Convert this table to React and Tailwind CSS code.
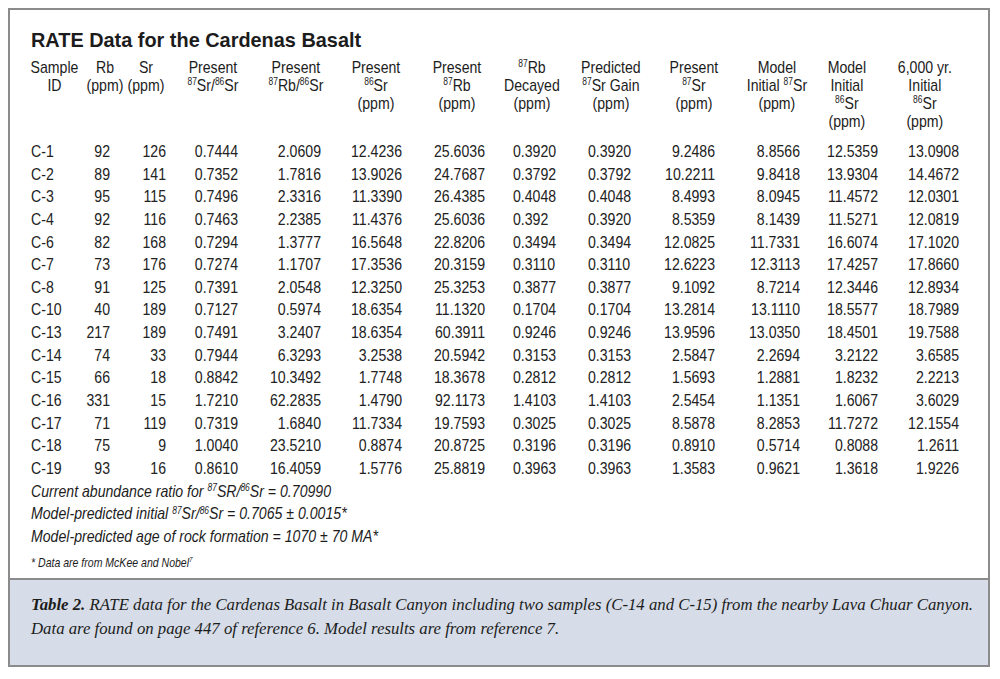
const rows = [
  ["C-1", "92", "126", "0.7444", "2.0609", "12.4236", "25.6036", "0.3920", "0.3920", "9.2486", "8.8566", "12.5359", "13.0908"],
  ["C-2", "89", "141", "0.7352", "1.7816", "13.9026", "24.7687", "0.3792", "0.3792", "10.2211", "9.8418", "13.9304", "14.4672"],
  ["C-3", "95", "115", "0.7496", "2.3316", "11.3390", "26.4385", "0.4048", "0.4048", "8.4993", "8.0945", "11.4572", "12.0301"],
  ["C-4", "92", "116", "0.7463", "2.2385", "11.4376", "25.6036", "0.392", "0.3920", "8.5359", "8.1439", "11.5271", "12.0819"],
  ["C-6", "82", "168", "0.7294", "1.3777", "16.5648", "22.8206", "0.3494", "0.3494", "12.0825", "11.7331", "16.6074", "17.1020"],
  ["C-7", "73", "176", "0.7274", "1.1707", "17.3536", "20.3159", "0.3110", "0.3110", "12.6223", "12.3113", "17.4257", "17.8660"],
  ["C-8", "91", "125", "0.7391", "2.0548", "12.3250", "25.3253", "0.3877", "0.3877", "9.1092", "8.7214", "12.3446", "12.8934"],
  ["C-10", "40", "189", "0.7127", "0.5974", "18.6354", "11.1320", "0.1704", "0.1704", "13.2814", "13.1110", "18.5577", "18.7989"],
  ["C-13", "217", "189", "0.7491", "3.2407", "18.6354", "60.3911", "0.9246", "0.9246", "13.9596", "13.0350", "18.4501", "19.7588"],
  ["C-14", "74", "33", "0.7944", "6.3293", "3.2538", "20.5942", "0.3153", "0.3153", "2.5847", "2.2694", "3.2122", "3.6585"],
  ["C-15", "66", "18", "0.8842", "10.3492", "1.7748", "18.3678", "0.2812", "0.2812", "1.5693", "1.2881", "1.8232", "2.2213"],
  ["C-16", "331", "15", "1.7210", "62.2835", "1.4790", "92.1173", "1.4103", "1.4103", "2.5454", "1.1351", "1.6067", "3.6029"],
  ["C-17", "71", "119", "0.7319", "1.6840", "11.7334", "19.7593", "0.3025", "0.3025", "8.5878", "8.2853", "11.7272", "12.1554"],
  ["C-18", "75", "9", "1.0040", "23.5210", "0.8874", "20.8725", "0.3196", "0.3196", "0.8910", "0.5714", "0.8088", "1.2611"],
  ["C-19", "93", "16", "0.8610", "16.4059", "1.5776", "25.8819", "0.3963", "0.3963", "1.3583", "0.9621", "1.3618", "1.9226"],
];

// alignment of each data column
const cellAlign = [
  "text-left",
  "text-right",
  "text-right",
  "text-right",
  "text-right",
  "text-right",
  "text-right",
  "text-left pl-[33.7px]",
  "text-left",
  "text-right",
  "text-right",
  "text-right",
  "text-right",
];

function S({ children }) {
  return <sup className="text-[0.6em] top-[-0.55em]">{children}</sup>;
}

const headers = [
  ["Sample", "ID"],
  ["Rb", "(ppm)"],
  ["Sr", "(ppm)"],
  ["Present", <><S>87</S>Sr/<S>86</S>Sr</>],
  ["Present", <><S>87</S>Rb/<S>86</S>Sr</>],
  ["Present", <><S>86</S>Sr</>, "(ppm)"],
  ["Present", <><S>87</S>Rb</>, "(ppm)"],
  [<><S>87</S>Rb</>, "Decayed", "(ppm)"],
  ["Predicted", <><S>87</S>Sr Gain</>, "(ppm)"],
  ["Present", <><S>87</S>Sr</>, "(ppm)"],
  ["Model", <>Initial <S>87</S>Sr</>, "(ppm)"],
  ["Model", "Initial", <><S>86</S>Sr</>, "(ppm)"],
  ["6,000 yr.", "Initial", <><S>86</S>Sr</>, "(ppm)"],
];

export default function App() {
  return (
    <div className="w-[1000px] h-[679px] bg-white pt-[8px] pl-[8px]">
      <div className="w-[982px] border-2 border-[#8b8b8b] text-[#1c1c1c]">
        {/* Table */}
        <div className="pl-[21px] pt-[18px] pb-[8px]">
          <h1 className="font-['Liberation_Sans',sans-serif] font-bold text-[19.9px] leading-[24px]">
            RATE Data for the Cardenas Basalt
          </h1>

          {/* condensed block: laid out wide, squeezed horizontally */}
          <div className="w-[1129px] origin-top-left scale-x-[0.83] font-['Liberation_Sans',sans-serif] text-[17px]">
            <div className="mt-[7px] grid grid-cols-[56.6px_65.1px_33.7px_127.7px_72.3px_120.5px_74.7px_106px_84.3px_115.7px_84.3px_84.3px_103.6px] leading-[18px]">
              {headers.map((lines, i) => (
                <div key={i} className="flex flex-col items-center">
                  {lines.map((l, j) => (
                    <span key={j} className="whitespace-nowrap">
                      {l}
                    </span>
                  ))}
                </div>
              ))}
            </div>

            <div className="mt-[10px] leading-[22.64px] text-[#222]">
              {rows.map((r) => (
                <div
                  key={r[0]}
                  className="grid grid-cols-[47px_48.2px_67.5px_86.7px_100px_97.6px_100px_124.1px_62.7px_90.4px_102.4px_94px_97.6px]"
                >
                  {r.map((v, i) => (
                    <div key={i} className={`whitespace-nowrap ${cellAlign[i]}`}>
                      {v}
                    </div>
                  ))}
                </div>
              ))}
            </div>

            <div className="italic text-[17px] leading-[22.64px]">
              <p>
                Current abundance ratio for <S>87</S>SR/<S>86</S>Sr = 0.70990
              </p>
              <p>
                Model-predicted initial <S>87</S>Sr/<S>86</S>Sr = 0.7065 ± 0.0015*
              </p>
              <p>Model-predicted age of rock formation = 1070 ± 70 MA*</p>
            </div>

            <p className="italic text-[12.7px] leading-[14px] mt-[7px]">
              * Data are from McKee and Nobel<S>7</S>
            </p>
          </div>
        </div>

        {/* Caption */}
        <div className="border-t-2 border-[#8b8b8b] bg-[#d6dde8] pl-[21px] pt-[13px] pb-[24px] font-['Liberation_Serif',serif] italic text-[16.75px] leading-[24px] text-[#1c1c1c]">
          <p className="whitespace-nowrap">
            <b>Table 2.</b> RATE data for the Cardenas Basalt in Basalt Canyon including two samples (C-14 and C-15) from the nearby Lava Chuar Canyon.
          </p>
          <p className="whitespace-nowrap">
            Data are found on page 447 of reference 6. Model results are from reference 7.
          </p>
        </div>
      </div>
    </div>
  );
}
